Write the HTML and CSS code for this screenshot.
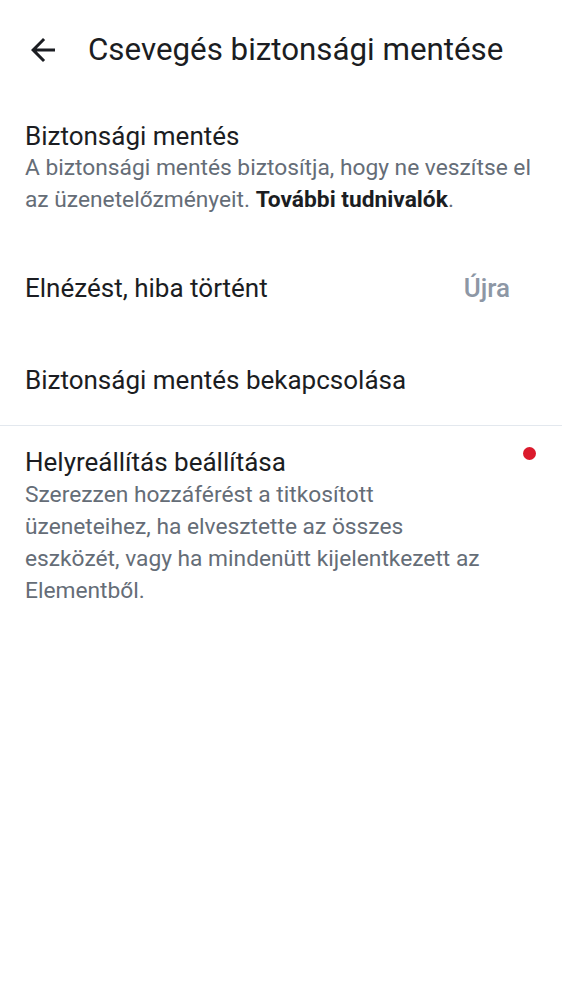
FILE: index.html
```html
<!DOCTYPE html>
<html lang="hu">
<head>
<meta charset="utf-8">
<link rel="stylesheet" href="styles.css">
</head>
<body>
<header class="topbar">
  <svg class="back" viewBox="0 0 24 24" width="36" height="36"><path d="M20 11H7.83l5.59-5.59L12 4l-8 8 8 8 1.41-1.41L7.83 13H20v-2z" fill="#1b1d22"/></svg>
  <h1 class="title">Csevegés biztonsági mentése</h1>
</header>
<main>
  <section class="item intro">
    <div class="item-title">Biztonsági mentés</div>
    <div class="item-sub">A biztonsági mentés biztosítja, hogy ne veszítse el<br>az üzenetelőzményeit. <b>További tudnivalók</b>.</div>
  </section>
  <section class="row error">
    <span class="row-title">Elnézést, hiba történt</span>
    <span class="retry">Újra</span>
  </section>
  <section class="row enable">
    <span class="row-title">Biztonsági mentés bekapcsolása</span>
  </section>
  <hr class="divider">
  <section class="item recovery">
    <div class="item-title">Helyreállítás beállítása</div>
    <div class="item-sub">Szerezzen hozzáférést a titkosított<br>üzeneteihez, ha elvesztette az összes<br>eszközét, vagy ha mindenütt kijelentkezett az<br>Elementből.</div>
    <span class="dot"></span>
  </section>
</main>
</body>
</html>
```
FILE: styles.css
```css
* { box-sizing: border-box; }
body {
  margin: 0;
  background: #ffffff;
  font-family: Roboto, "Noto Sans", sans-serif;
  color: #1b1d22;
}
.topbar {
  display: flex;
  align-items: center;
  height: 100px;
  padding-left: 25px;
}
.back { display: block; flex: none; }
.title {
  margin: 0 0 0 27px;
  font-size: 31.3px;
  line-height: 40px;
  font-weight: 400;
  white-space: nowrap;
}
.item {
  position: relative;
  padding: 0 25px;
}
.intro { padding-top: 19px; }
.item-title,
.row-title {
  font-size: 26px;
  line-height: 34px;
  color: #1b1d22;
}
.item-sub {
  font-size: 22.75px;
  line-height: 32px;
  color: #656d77;
  white-space: nowrap;
}
.intro .item-sub { margin-top: -1px; }
.item-sub b { color: #1b1d22; font-weight: 700; }
.row {
  display: flex;
  align-items: center;
  justify-content: space-between;
  padding: 0 52px 0 25px;
  height: 93px;
}
.error { margin-top: 25px; }
.enable { height: 91px; }
.retry {
  font-size: 26px;
  font-weight: 500;
  color: #8d97a5;
}
.divider {
  border: 0;
  border-top: 1px solid #e3e8ee;
  margin: 0;
}
.recovery { padding-top: 19px; padding-right: 70px; }
.dot {
  position: absolute;
  top: 21px;
  right: 26px;
  width: 13px;
  height: 13px;
  border-radius: 50%;
  background: #db1a2c;
}
```
